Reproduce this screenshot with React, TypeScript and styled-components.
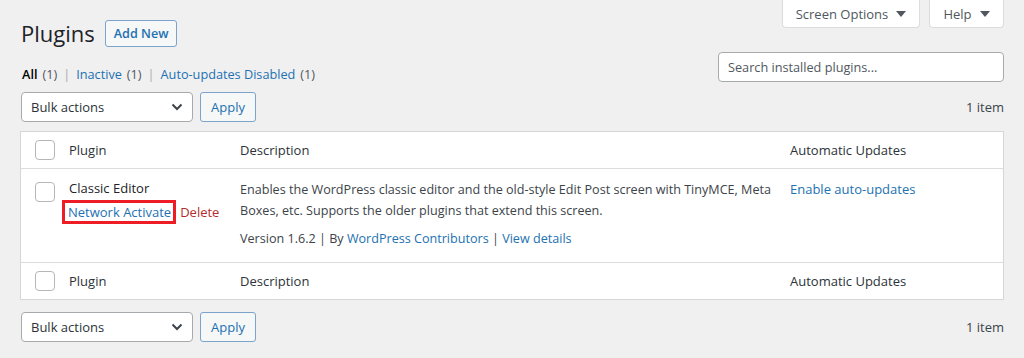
import React from "react";
import styled, { createGlobalStyle } from "styled-components";

const Global = createGlobalStyle`
  html, body { margin: 0; padding: 0; background: #f0f0f1; }
  body {
    font-family: "Open Sans", "Noto Sans", "Liberation Sans", sans-serif;
    font-size: 13px;
    color: #3c434a;
  }
  * { box-sizing: border-box; }
`;

const Page = styled.div`
  width: 1024px;
  height: 358px;
  overflow: hidden;
  padding: 0 20px;
`;

const Header = styled.div`
  display: flex;
  justify-content: space-between;
  align-items: flex-start;
  height: 52px;
`;

const TitleGroup = styled.div`
  display: flex;
  align-items: center;
  gap: 10px;
  padding-top: 20px;
  padding-left: 1px;
`;

const Title = styled.h1`
  margin: 0;
  font-size: 22px;
  font-weight: 400;
  color: #1d2327;
  line-height: 27px;
`;

const OutlineButton = styled.a<{ h?: number; bold?: boolean; px?: number }>`
  display: inline-flex;
  align-items: center;
  justify-content: center;
  height: ${(p) => p.h ?? 30}px;
  padding: 0 ${(p) => p.px ?? 10}px;
  border: 1px solid #7ba3cc;
  border-radius: 3px;
  background: #f6f7f7;
  color: #2271b1;
  font-size: ${(p) => (p.bold ? 12.6 : 13)}px;
  font-weight: ${(p) => (p.bold ? 600 : 400)};
  text-decoration: none;
  white-space: nowrap;
`;

const MetaLinks = styled.div`
  display: flex;
  gap: 9px;
`;

const MetaTab = styled.button<{ w: number }>`
  display: inline-flex;
  align-items: center;
  justify-content: center;
  gap: 8px;
  height: 28px;
  width: ${(p) => p.w}px;
  border: 1px solid #dcdcde;
  border-top: none;
  border-radius: 0 0 4px 4px;
  background: #fff;
  color: #50575e;
  font-family: inherit;
  font-size: 13px;
  padding: 0;
`;

const FilterRow = styled.div`
  display: flex;
  justify-content: space-between;
  align-items: flex-end;
  height: 30px;
`;

const SubSub = styled.ul`
  display: flex;
  gap: 5px;
  margin: 0;
  padding: 0 0 0 2px;
  list-style: none;
  line-height: 16px;
  font-size: 12.7px;
  color: #50575e;
`;

const SubItem = styled.li`
  display: flex;
  gap: 5px;
`;

const SubLink = styled.a<{ current?: boolean }>`
  color: ${(p) => (p.current ? "#000" : "#2271b1")};
  font-weight: ${(p) => (p.current ? 600 : 400)};
  text-decoration: none;
`;

const Count = styled.span`
  color: #50575e;
`;

const Sep = styled.span`
  color: #a7aaad;
  margin: 0 1px;
`;

const Search = styled.input`
  width: 286px;
  height: 30px;
  border: 1px solid #a7aaad;
  border-radius: 4px;
  padding: 0 9px;
  font-family: inherit;
  font-size: 12.7px;
  color: #2c3338;
  background: #fff;
  &::placeholder { color: #50575e; }
`;

const TableNav = styled.div<{ top: number }>`
  display: flex;
  justify-content: space-between;
  align-items: center;
  height: 30px;
  margin-top: ${(p) => p.top}px;
`;

const Actions = styled.div`
  display: flex;
  gap: 7px;
  padding-left: 1px;
`;

const Select = styled.div`
  display: flex;
  align-items: center;
  justify-content: space-between;
  width: 172px;
  height: 30px;
  padding: 0 9px 0 9px;
  border: 1px solid #a7aaad;
  border-radius: 4px;
  background: #fff;
  color: #2c3338;
  font-size: 13px;
`;

const ItemCount = styled.span`
  color: #3c434a;
  font-size: 13px;
`;

const Table = styled.div`
  margin-top: 9px;
  background: #fff;
  border: 1px solid #d6d6d8;
`;

const Row = styled.div<{ h: number; divider?: boolean; head?: boolean }>`
  display: grid;
  grid-template-columns: 38px 171px 550px 1fr;
  height: ${(p) => p.h}px;
  align-items: ${(p) => (p.head ? "center" : "start")};
  border-bottom: ${(p) => (p.divider ? "1px solid #dcdcde" : "none")};
  font-size: 13px;
`;

const Cell = styled.div<{ pt?: number; head?: boolean }>`
  padding: ${(p) => p.pt ?? 0}px 10px 0 10px;
  color: ${(p) => (p.head ? "#2c3338" : "#3c434a")};
  line-height: 21px;
`;

const DescCell = styled(Cell)`
  font-size: 12.6px;
`;

const CheckCell = styled.div<{ pt?: number }>`
  padding: ${(p) => p.pt ?? 0}px 0 0 14px;
  display: flex;
`;

const Check = styled.span`
  display: block;
  width: 20px;
  height: 20px;
  border: 1px solid #b4b6b9;
  border-radius: 4px;
  background: #fff;
`;

const PluginName = styled.div`
  color: #1d2327;
  line-height: 20px;
`;

const RowActions = styled.div`
  display: flex;
  align-items: center;
  gap: 4px;
  margin-top: 2px;
  margin-left: -7px;
  white-space: nowrap;
`;

const Highlight = styled.span`
  display: inline-flex;
  align-items: center;
  flex: none;
  height: 24px;
  padding: 0 2px 0 3px;
  border: 3px solid #ee1c25;
`;

const Link = styled.a<{ danger?: boolean }>`
  color: ${(p) => (p.danger ? "#b32d2e" : "#2271b1")};
  text-decoration: none;
`;

const Desc = styled.p`
  margin: 0;
  white-space: nowrap;
`;

const Meta = styled.div`
  margin-top: 7px;
`;

const Triangle = () => (
  <svg width="10" height="6" viewBox="0 0 10 6">
    <path d="M0 0h10L5 6z" fill="#50575e" />
  </svg>
);

const Chevron = () => (
  <svg width="12" height="8" viewBox="0 0 12 8">
    <path d="M1.5 1.5L6 6l4.5-4.5" fill="none" stroke="#3c434a" strokeWidth="2" />
  </svg>
);

const Nav = ({ top }: { top: number }) => (
  <TableNav top={top}>
    <Actions>
      <Select>
        <span>Bulk actions</span>
        <Chevron />
      </Select>
      <OutlineButton href="#">Apply</OutlineButton>
    </Actions>
    <ItemCount>1 item</ItemCount>
  </TableNav>
);

export default function App() {
  return (
    <Page>
      <Global />
      <Header>
        <TitleGroup>
          <Title>Plugins</Title>
          <OutlineButton href="#" h={27} px={8} bold>
            Add New
          </OutlineButton>
        </TitleGroup>
        <MetaLinks>
          <MetaTab w={138}>
            Screen Options <Triangle />
          </MetaTab>
          <MetaTab w={75}>
            Help <Triangle />
          </MetaTab>
        </MetaLinks>
      </Header>
      <FilterRow>
        <SubSub>
          <SubItem>
            <SubLink current href="#">All</SubLink>
            <Count>(1)</Count>
            <Sep>|</Sep>
          </SubItem>
          <SubItem>
            <SubLink href="#">Inactive</SubLink>
            <Count>(1)</Count>
            <Sep>|</Sep>
          </SubItem>
          <SubItem>
            <SubLink href="#">Auto-updates Disabled</SubLink>
            <Count>(1)</Count>
          </SubItem>
        </SubSub>
        <Search placeholder="Search installed plugins..." />
      </FilterRow>
      <Nav top={10} />
      <Table>
        <Row h={37} head divider>
          <CheckCell><Check /></CheckCell>
          <Cell head>Plugin</Cell>
          <Cell head>Description</Cell>
          <Cell head>Automatic Updates</Cell>
        </Row>
        <Row h={94} divider>
          <CheckCell pt={13}><Check /></CheckCell>
          <Cell pt={9}>
            <PluginName>Classic Editor</PluginName>
            <RowActions>
              <Highlight>
                <Link href="#">Network Activate</Link>
              </Highlight>
              <Link href="#" danger>Delete</Link>
            </RowActions>
          </Cell>
          <DescCell pt={10}>
            <Desc>
              Enables the WordPress classic editor and the old-style Edit Post screen with TinyMCE, Meta
              <br />
              Boxes, etc. Supports the older plugins that extend this screen.
            </Desc>
            <Meta>
              Version 1.6.2 | By <Link href="#">WordPress Contributors</Link> |{" "}
              <Link href="#">View details</Link>
            </Meta>
          </DescCell>
          <Cell pt={10}>
            <Link href="#">Enable auto-updates</Link>
          </Cell>
        </Row>
        <Row h={36} head>
          <CheckCell><Check /></CheckCell>
          <Cell head>Plugin</Cell>
          <Cell head>Description</Cell>
          <Cell head>Automatic Updates</Cell>
        </Row>
      </Table>
      <Nav top={12} />
    </Page>
  );
}
